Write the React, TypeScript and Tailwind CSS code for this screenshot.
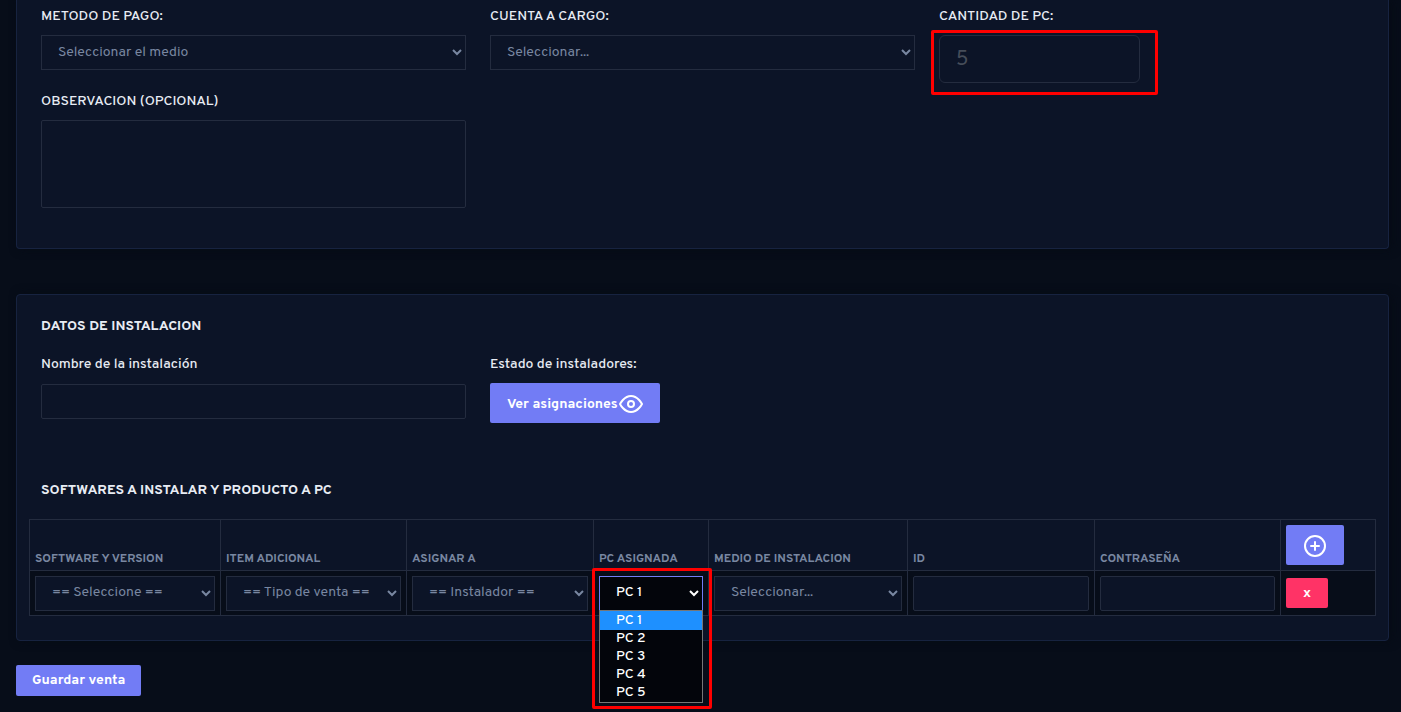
import React from "react";

const field =
  "block w-full border border-[#242c3f] bg-[#0c1427] px-3 text-sm text-[#7987a1] outline-none";
const cell = "border border-[#242c3f] px-[5px]";
const heading = "text-sm font-bold text-[#e8ecf4]";
const label = "mb-2 block text-sm leading-5 font-medium text-[#e8ecf4]";
const card =
  "rounded border border-[#172340] bg-[#0c1427] px-6 shadow-[3px_0_10px_0_#060b15]";

function Select({ id, text, aria }: { id: string; text: string; aria?: string }) {
  return (
    <select id={id} aria-label={aria} className={`${field} h-[35px] pb-px`}>
      <option>{text}</option>
    </select>
  );
}

function EyeIcon() {
  return (
    <svg width="24" height="24" viewBox="0 0 24 24" fill="none" stroke="currentColor" strokeWidth="2" strokeLinecap="round" strokeLinejoin="round" aria-hidden="true">
      <path d="M1 12s4-8 11-8 11 8 11 8-4 8-11 8-11-8-11-8z" />
      <circle cx="12" cy="12" r="3" />
    </svg>
  );
}

function PlusCircleIcon() {
  return (
    <svg width="24" height="24" viewBox="0 0 24 24" fill="none" stroke="currentColor" strokeWidth="2" strokeLinecap="round" strokeLinejoin="round" aria-hidden="true">
      <circle cx="12" cy="12" r="10" />
      <path d="M12 8v8M8 12h8" />
    </svg>
  );
}

const headers = [
  "SOFTWARE Y VERSION",
  "ITEM ADICIONAL",
  "ASIGNAR A",
  "PC ASIGNADA",
  "MEDIO DE INSTALACION",
  "ID",
  "CONTRASEÑA",
];

const pcs = ["PC 1", "PC 2", "PC 3", "PC 4", "PC 5"];

export default function App() {
  return (
    <main className="min-h-screen bg-[#070d19] pr-3 pl-4 font-['Overpass',Roboto,sans-serif]">
      <section className={`${card} rounded-t-none border-t-0 pt-[7px] pb-10`}>
        <div className="grid grid-cols-3 gap-x-6 gap-y-[22px]">
          <div>
            <label htmlFor="metodo" className={label}>METODO DE PAGO:</label>
            <Select id="metodo" text="Seleccionar el medio" />
          </div>
          <div>
            <label htmlFor="cuenta" className={label}>CUENTA A CARGO:</label>
            <Select id="cuenta" text="Seleccionar..." />
          </div>
          <div className="h-[63px]">
            <label htmlFor="cantidad" className={label}>CANTIDAD DE PC:</label>
            <div className="relative w-[201px]">
              <input
                id="cantidad"
                placeholder="5"
                className="block h-12 w-full rounded-md border border-[#242c3f] bg-[#0c1427] px-4 pt-0.5 text-xl text-[#7987a1] outline-none placeholder:text-[#464d59]"
              />
              <div className="pointer-events-none absolute -top-[5px] -right-[18px] -bottom-3 -left-2 rounded-xs border-3 border-[#ff0000]" />
            </div>
          </div>
          <div>
            <label htmlFor="obs" className={label}>OBSERVACION (OPCIONAL)</label>
            <textarea id="obs" className={`${field} h-[88px] resize-none rounded-xs`} />
          </div>
        </div>
      </section>

      <section className={`${card} mt-[45px] pt-[22px] pb-6`}>
        <h2 className={heading}>DATOS DE INSTALACION</h2>
        <div className="mt-[18px] grid grid-cols-3 gap-6">
          <div>
            <label htmlFor="nombre" className={label}>Nombre de la instalación</label>
            <input id="nombre" className={`${field} mt-[9px] h-[35px] rounded-xs`} />
          </div>
          <div>
            <p className={label}>Estado de instaladores:</p>
            <button type="button" className="flex h-10 items-center gap-px rounded-xs bg-[#727cf5] px-[17px] pt-0.5 text-sm font-bold text-white">
              <span className="pt-0.5">Ver asignaciones</span>
              <EyeIcon />
            </button>
          </div>
        </div>

        <h2 className={`${heading} mt-[58px]`}>SOFTWARES A INSTALAR Y PRODUCTO A PC</h2>
        <div className="-mx-3 mt-[18px]">
          <table className="w-full table-fixed border-collapse">
            <colgroup>
              <col className="w-[191px]" />
              <col className="w-[186px]" />
              <col className="w-[187px]" />
              <col className="w-[115px]" />
              <col className="w-[199px]" />
              <col className="w-[187px]" />
              <col className="w-[186px]" />
              <col className="w-[95px]" />
            </colgroup>
            <thead>
              <tr className="h-[51px]">
                {headers.map((h) => (
                  <th key={h} scope="col" className={`${cell} pb-[3px] text-left align-bottom text-xs font-bold whitespace-nowrap text-[#7987a1]`}>
                    {h}
                  </th>
                ))}
                <th scope="col" className={`${cell} text-left`}>
                  <button type="button" aria-label="Agregar" className="flex h-10 w-[58px] items-center justify-center rounded-xs bg-[#727cf5] pt-0.5 text-white">
                    <PlusCircleIcon />
                  </button>
                </th>
              </tr>
            </thead>
            <tbody>
              <tr className="h-[45px] bg-[#070d19]">
                <td className={cell}><Select id="software" aria="Software y version" text="== Seleccione ==" /></td>
                <td className={cell}><Select id="item" aria="Item adicional" text="== Tipo de venta ==" /></td>
                <td className={cell}><Select id="asignar" aria="Asignar a" text="== Instalador ==" /></td>
                <td className={cell}>
                  <div className="relative">
                    <select aria-label="PC asignada" className="block h-[35px] w-full border border-[#727cf5] bg-[#03050b] px-3 pb-px text-sm font-medium text-white outline-none">
                      {pcs.map((p) => <option key={p}>{p}</option>)}
                    </select>
                    <ul role="listbox" aria-label="PC" className="absolute inset-x-0 top-[34px] z-10 border border-[#767676] bg-[#03050b] text-sm leading-[18px] font-medium text-white">
                      {pcs.map((p, i) => (
                        <li key={p} role="option" aria-selected={i === 0} className={i === 0 ? "bg-[#1e90ff] px-4 pt-px" : "px-4"}>
                          {p}
                        </li>
                      ))}
                    </ul>
                    <div className="pointer-events-none absolute -top-2 -right-[9px] -left-[7px] z-20 h-[141px] rounded-xs border-3 border-[#ff0000]" />
                  </div>
                </td>
                <td className={cell}><Select id="medio" aria="Medio de instalacion" text="Seleccionar..." /></td>
                <td className={cell}><input aria-label="ID" className={`${field} h-[35px] rounded-xs`} /></td>
                <td className={cell}><input aria-label="Contraseña" className={`${field} h-[35px] rounded-xs`} /></td>
                <td className={cell}>
                  <button type="button" aria-label="Quitar" className="block h-[30px] w-[42px] rounded-xs bg-[#ff3366] pt-0.5 text-sm font-bold text-white">
                    x
                  </button>
                </td>
              </tr>
            </tbody>
          </table>
        </div>
      </section>

      <button type="button" className="mt-6 block h-[31px] rounded-xs bg-[#727cf5] px-4 text-sm font-bold text-white">
        Guardar venta
      </button>
    </main>
  );
}
